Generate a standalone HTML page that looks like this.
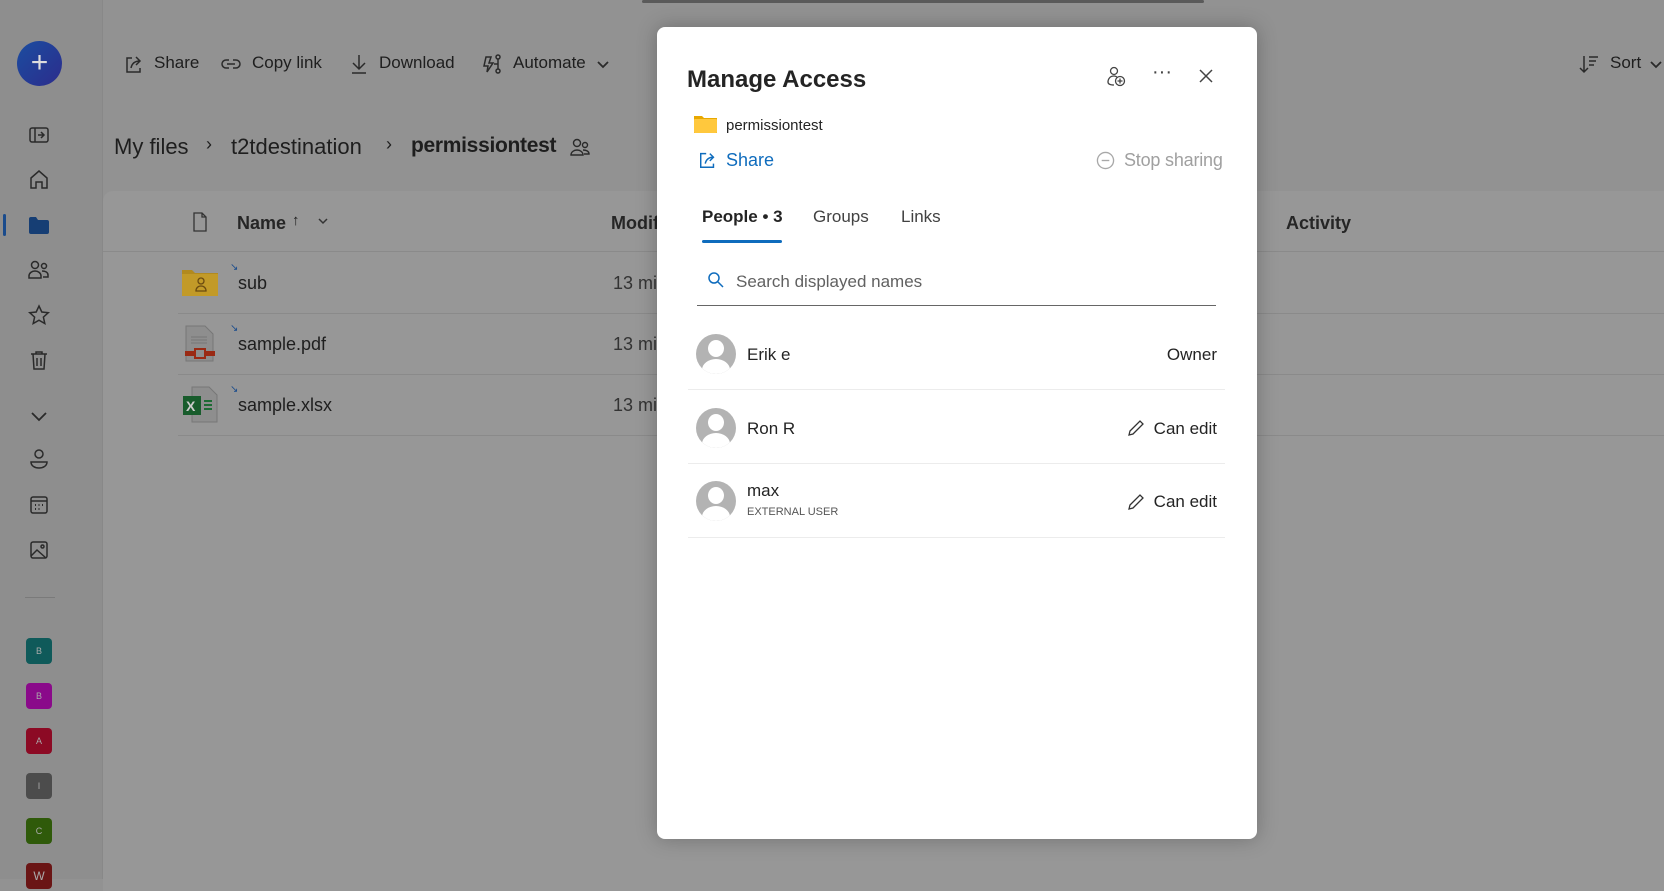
<!DOCTYPE html>
<html><head><meta charset="utf-8"><style>
*{margin:0;padding:0;box-sizing:border-box}
body{width:1664px;height:879px;overflow:hidden;background:#929292;font-family:"Liberation Sans",sans-serif;color:#1e1e1e;position:relative}
.a{position:absolute;white-space:nowrap}
.side{position:absolute;left:0;top:0;width:103px;height:879px;background:#8e8e8e;border-right:1px solid #888}
.ic{position:absolute;width:22px;height:22px}
.sq{position:absolute;left:26px;width:26px;height:26px;border-radius:4px;color:#aaa;font-size:9px;text-align:center;line-height:26px}
.card{position:absolute;left:103px;top:191px;width:1561px;height:700px;background:#979797;border-top-left-radius:10px}
.sep{position:absolute;height:1px;background:#8a8a8a}
.modal{position:absolute;left:657px;top:27px;width:600px;height:812px;background:#fff;border-radius:8px;box-shadow:0 0 20px rgba(0,0,0,.25)}
.m{position:absolute;white-space:nowrap;color:#242424}
.msep{position:absolute;left:31px;width:537px;height:1px;background:#ececec}
.av{position:absolute;left:39px;width:40px;height:40px;border-radius:50%;background:#b3b3b3;overflow:hidden}
.av:before{content:"";position:absolute;left:12px;top:6px;width:16px;height:17px;border-radius:50%;background:#fff}
.av:after{content:"";position:absolute;left:6px;top:25px;width:28px;height:22px;border-radius:50% 50% 0 0;background:#fff}
</style></head><body>
<div style="position:absolute;left:642px;top:0;width:562px;height:3px;background:#5a5a5a;border-radius:2px"></div>
<div class="side">
<div style="position:absolute;left:17px;top:41px;width:45px;height:45px;border-radius:50%;background:linear-gradient(135deg,#1b4da0,#2c2c8c);color:#ddd;font-size:30px;text-align:center;line-height:43px">+</div>
<svg class="ic" style="left:28px;top:124px" viewBox="0 0 22 22" fill="none" stroke="#2a2a2a" stroke-width="1.5"><rect x="2" y="4" width="18" height="14" rx="2"/><path d="M7 4v14M10 11h6M13 8l3 3-3 3"/></svg>
<svg class="ic" style="left:28px;top:168px" viewBox="0 0 22 22" fill="none" stroke="#2a2a2a" stroke-width="1.5"><path d="M3 10l8-7 8 7v10h-5v-6h-6v6H3z"/></svg>
<div style="position:absolute;left:3px;top:214px;width:3px;height:22px;background:#1a4b8c;border-radius:2px"></div>
<svg class="ic" style="left:28px;top:214px" viewBox="0 0 22 22"><path d="M1 5a2 2 0 012-2h5l2 3h9a2 2 0 012 2v10a2 2 0 01-2 2H3a2 2 0 01-2-2z" fill="#163e74"/></svg>
<svg class="ic" style="left:28px;top:259px" viewBox="0 0 22 22" fill="none" stroke="#2a2a2a" stroke-width="1.5"><circle cx="7" cy="6" r="3.5"/><circle cx="16" cy="7" r="2.5"/><path d="M1 17c0-3 3-5 6-5s6 2 6 5v2H1zM14 12c3 0 6 1 6 4v2h-5"/></svg>
<svg class="ic" style="left:28px;top:304px" viewBox="0 0 22 22" fill="none" stroke="#2a2a2a" stroke-width="1.5"><path d="M11 2l2.8 6 6.5.7-4.9 4.4 1.4 6.4L11 16.2l-5.8 3.3 1.4-6.4L1.7 8.7 8.2 8z"/></svg>
<svg class="ic" style="left:28px;top:349px" viewBox="0 0 22 22" fill="none" stroke="#2a2a2a" stroke-width="1.5"><path d="M3 5h16M8 5V3h6v2M5 5l1 15h10l1-15M9 9v8M13 9v8"/></svg>
<svg class="ic" style="left:28px;top:405px" viewBox="0 0 22 22" fill="none" stroke="#2a2a2a" stroke-width="1.8"><path d="M4 8l7 7 7-7"/></svg>
<svg class="ic" style="left:28px;top:448px" viewBox="0 0 22 22" fill="none" stroke="#2a2a2a" stroke-width="1.5"><circle cx="11" cy="6" r="4"/><path d="M3 14h16c0 4-4 6-8 6s-8-2-8-6z"/></svg>
<svg class="ic" style="left:28px;top:494px" viewBox="0 0 22 22" fill="none" stroke="#2a2a2a" stroke-width="1.5"><rect x="3" y="3" width="16" height="16" rx="2"/><path d="M3 7h16"/><path d="M7 11h1M10.5 11h1M14 11h1M7 15h1M10.5 15h1" stroke-width="2"/></svg>
<svg class="ic" style="left:28px;top:539px" viewBox="0 0 22 22" fill="none" stroke="#2a2a2a" stroke-width="1.5"><rect x="3" y="3" width="16" height="16" rx="2"/><circle cx="14.5" cy="7.5" r="1.5"/><path d="M3 17l6-6 9 8"/></svg>
<div style="position:absolute;left:25px;top:597px;width:30px;height:1px;background:#7a7a7a"></div>
<div class="sq" style="top:638px;background:#0f5a5a">B</div>
<div class="sq" style="top:683px;background:#8a0a8a">B</div>
<div class="sq" style="top:728px;background:#8c0a24">A</div>
<div class="sq" style="top:773px;background:#4c4c4c">I</div>
<div class="sq" style="top:818px;background:#2f5a0a">C</div>
<div class="sq" style="top:863px;background:#6a1515;font-size:12px">W</div>
</div>
<!-- toolbar -->
<svg class="ic" style="left:123px;top:53px" viewBox="0 0 22 22" fill="none" stroke="#2a2a2a" stroke-width="1.5"><path d="M9 5H4v14h13v-4M8 15c1-5 4-7 9-7M13 4l4 4-4 4"/></svg>
<div class="a" style="left:154px;top:53px;font-size:17px">Share</div>
<svg class="ic" style="left:220px;top:53px" viewBox="0 0 22 22" fill="none" stroke="#2a2a2a" stroke-width="1.5"><path d="M9 7H6a4 4 0 000 8h3M13 7h3a4 4 0 010 8h-3M7 11h8"/></svg>
<div class="a" style="left:252px;top:53px;font-size:17px">Copy link</div>
<svg class="ic" style="left:348px;top:53px" viewBox="0 0 22 22" fill="none" stroke="#2a2a2a" stroke-width="1.5"><path d="M11 2v14M5 10l6 6 6-6M4 20h14"/></svg>
<div class="a" style="left:379px;top:53px;font-size:17px">Download</div>
<svg class="ic" style="left:481px;top:53px" viewBox="0 0 22 22" fill="none" stroke="#2a2a2a" stroke-width="1.5"><path d="M5 4h5l-2 6h4l-6 9 1-6H3z"/><circle cx="17" cy="4" r="2"/><circle cx="17" cy="18" r="2"/><path d="M17 6v10M13 11h4"/></svg>
<div class="a" style="left:513px;top:53px;font-size:17px">Automate</div>
<svg class="ic" style="left:595px;top:53px;width:16px" viewBox="0 0 16 22" fill="none" stroke="#2a2a2a" stroke-width="1.8"><path d="M3 9l5 5 5-5"/></svg>
<svg class="ic" style="left:1578px;top:53px" viewBox="0 0 22 22" fill="none" stroke="#2a2a2a" stroke-width="1.5"><path d="M6 3v16M2 15l4 4 4-4M11 4h9M11 8h7M11 12h5"/></svg>
<div class="a" style="left:1610px;top:53px;font-size:17px">Sort</div>
<svg class="ic" style="left:1648px;top:53px;width:16px" viewBox="0 0 16 22" fill="none" stroke="#2a2a2a" stroke-width="1.8"><path d="M3 9l5 5 5-5"/></svg>
<!-- breadcrumb -->
<div class="a" style="left:114px;top:134px;font-size:22px">My files</div>
<div class="a" style="left:206px;top:134px;font-size:18px">›</div>
<div class="a" style="left:231px;top:134px;font-size:22px">t2tdestination</div>
<div class="a" style="left:386px;top:134px;font-size:18px">›</div>
<div class="a" style="left:411px;top:134px;font-size:21px;font-weight:bold;letter-spacing:-0.3px">permissiontest</div>
<svg class="ic" style="left:569px;top:137px" viewBox="0 0 22 22" fill="none" stroke="#2a2a2a" stroke-width="1.4"><circle cx="8" cy="6" r="3.5"/><circle cx="16" cy="8" r="2.5"/><path d="M2 18c0-3 3-5 6-5s6 2 6 5zM14 13c3 0 6 1 6 4h-5"/></svg>
<!-- card -->
<div class="card"></div>
<svg class="ic" style="left:189px;top:211px" viewBox="0 0 22 22" fill="none" stroke="#333" stroke-width="1.3"><path d="M5 2h8l4 4v14H5zM13 2v4h4"/></svg>
<div class="a" style="left:237px;top:213px;font-size:18px;font-weight:bold;color:#262626">Name</div>
<div class="a" style="left:292px;top:212px;font-size:15px">↑</div>
<svg class="ic" style="left:316px;top:213px;width:14px;height:16px" viewBox="0 0 14 16" fill="none" stroke="#333" stroke-width="1.5"><path d="M3 6l4 4 4-4"/></svg>
<div class="a" style="left:611px;top:213px;font-size:18px;font-weight:bold;color:#262626">Modif</div>
<div class="a" style="left:1286px;top:213px;font-size:18px;font-weight:bold;color:#262626">Activity</div>
<div class="sep" style="left:103px;top:251px;width:1561px"></div>
<div class="sep" style="left:178px;top:313px;width:1486px"></div>
<div class="sep" style="left:178px;top:374px;width:1486px"></div>
<div class="sep" style="left:178px;top:435px;width:1486px"></div>
<svg class="a" style="left:182px;top:268px" width="36" height="28" viewBox="0 0 36 28"><path d="M0 2h10l3 3h23v23H0z" fill="#b28a1e"/><rect x="0" y="6" width="36" height="22" fill="#c29a28"/><circle cx="19" cy="13" r="3" fill="none" stroke="#6a4a10" stroke-width="1.3"/><path d="M14 23c0-3 2-5 5-5s5 2 5 5z" fill="none" stroke="#6a4a10" stroke-width="1.3"/></svg>
<div class="a" style="left:238px;top:273px;font-size:18px">sub</div>
<svg class="a" style="left:185px;top:325px" width="30" height="37" viewBox="0 0 30 37"><path d="M1 1h19l8 8v27H1z" fill="#8e8e8e" stroke="#777"/><path d="M6 12h16M6 15h16M6 18h16" stroke="#777"/><rect x="0" y="26" width="30" height="5" fill="#9a2a14"/><rect x="10" y="24" width="10" height="9" fill="#8e8e8e" stroke="#9a2a14" stroke-width="2"/></svg>
<div class="a" style="left:238px;top:334px;font-size:18px">sample.pdf</div>
<svg class="a" style="left:182px;top:386px" width="36" height="37" viewBox="0 0 36 37"><path d="M10 1h17l8 8v27H10z" fill="#8e8e8e" stroke="#777"/><rect x="1" y="10" width="18" height="19" fill="#185c2c"/><text x="4" y="25" font-size="14" fill="#ccc" font-family="Liberation Sans" font-weight="bold">X</text><path d="M22 15h8M22 19h8M22 23h8" stroke="#1d6b34" stroke-width="2"/></svg>
<div class="a" style="left:238px;top:395px;font-size:18px">sample.xlsx</div>
<div class="a" style="left:230px;top:262px;font-size:10px;color:#1a4b8c">↘</div>
<div class="a" style="left:230px;top:323px;font-size:10px;color:#1a4b8c">↘</div>
<div class="a" style="left:230px;top:384px;font-size:10px;color:#1a4b8c">↘</div>
<div class="a" style="left:613px;top:273px;font-size:18px;color:#333">13 mi</div>
<div class="a" style="left:613px;top:334px;font-size:18px;color:#333">13 mi</div>
<div class="a" style="left:613px;top:395px;font-size:18px;color:#333">13 mi</div>
<!-- modal -->
<div class="modal">
<div class="m" style="left:30px;top:39px;font-size:24px;font-weight:bold;color:#242424">Manage Access</div>
<svg class="a" style="left:448px;top:39px" width="22" height="22" viewBox="0 0 22 22" fill="none" stroke="#444" stroke-width="1.3"><circle cx="9" cy="5" r="3.5"/><path d="M12 11c-1-.6-2-1-3-1-4 0-6 3-6 6 0 2 2 3 6 3"/><circle cx="15" cy="15" r="4.5"/><path d="M15 12.5v5M12.5 15h5"/></svg>
<div class="m" style="left:495px;top:34px;font-size:20px;color:#444">···</div>
<svg class="a" style="left:540px;top:40px" width="18" height="18" viewBox="0 0 18 18" stroke="#444" stroke-width="1.5"><path d="M3 3l12 12M15 3L3 15"/></svg>
<svg class="a" style="left:37px;top:88px" width="23" height="18" viewBox="0 0 23 18"><path d="M0 1h8l2 2h13v15H0z" fill="#e8a800"/><rect x="0" y="4" width="23" height="14" rx="1" fill="#ffc83d"/></svg>
<div class="m" style="left:69px;top:90px;font-size:15px">permissiontest</div>
<svg class="a" style="left:41px;top:123px" width="20" height="20" viewBox="0 0 22 22" fill="none" stroke="#0f6cbd" stroke-width="1.6"><path d="M9 4H3v15h14v-4M8 15c1-5 4-7 9-7M13 4l4 4-4 4"/></svg>
<div class="m" style="left:69px;top:123px;font-size:18px;color:#0f6cbd">Share</div>
<svg class="a" style="left:439px;top:124px" width="19" height="19" viewBox="0 0 20 20" fill="none" stroke="#a8a8a8" stroke-width="1.4"><circle cx="10" cy="10" r="8.5"/><path d="M6 10h8"/></svg>
<div class="m" style="left:467px;top:123px;font-size:18px;color:#a0a0a0;letter-spacing:-0.2px">Stop sharing</div>
<div class="m" style="left:45px;top:180px;font-size:17px;font-weight:bold">People • 3</div>
<div class="m" style="left:156px;top:180px;font-size:17px;color:#424242">Groups</div>
<div class="m" style="left:244px;top:180px;font-size:17px;color:#424242">Links</div>
<div style="position:absolute;left:45px;top:213px;width:80px;height:3px;background:#0f6cbd;border-radius:2px"></div>
<svg class="a" style="left:50px;top:244px" width="18" height="18" viewBox="0 0 18 18" fill="none" stroke="#0f6cbd" stroke-width="1.5"><circle cx="7" cy="7" r="5"/><path d="M11 11l5 5"/></svg>
<div class="m" style="left:79px;top:245px;font-size:17px;color:#616161">Search displayed names</div>
<div style="position:absolute;left:40px;top:278px;width:519px;height:1px;background:#666"></div>
<div class="av" style="top:307px"></div>
<div class="m" style="left:90px;top:318px;font-size:17px">Erik e</div>
<div class="m" style="right:40px;top:318px;font-size:17px">Owner</div>
<div class="msep" style="top:362px"></div>
<div class="av" style="top:381px"></div>
<div class="m" style="left:90px;top:392px;font-size:17px">Ron R</div>
<svg class="a" style="left:469px;top:391px" width="20" height="20" viewBox="0 0 20 20" fill="none" stroke="#333" stroke-width="1.3"><path d="M3 17l1-4L14 3l3 3L7 16z"/></svg>
<div class="m" style="right:40px;top:392px;font-size:17px">Can edit</div>
<div class="msep" style="top:436px"></div>
<div class="av" style="top:454px"></div>
<div class="m" style="left:90px;top:454px;font-size:17px">max</div>
<div class="m" style="left:90px;top:479px;font-size:11px;color:#555">EXTERNAL USER</div>
<svg class="a" style="left:469px;top:465px" width="20" height="20" viewBox="0 0 20 20" fill="none" stroke="#333" stroke-width="1.3"><path d="M3 17l1-4L14 3l3 3L7 16z"/></svg>
<div class="m" style="right:40px;top:465px;font-size:17px">Can edit</div>
<div class="msep" style="top:510px"></div>
</div>
</body></html>
